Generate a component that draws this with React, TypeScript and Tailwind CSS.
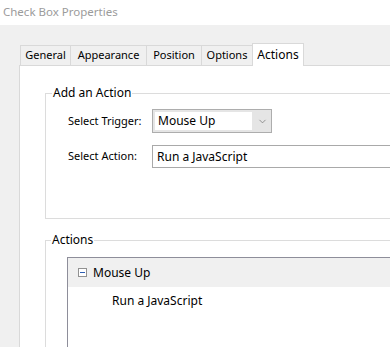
import { ChevronDown } from 'lucide-react';

const TABS = [
  { label: 'General', w: 'w-[51px]' },
  { label: 'Appearance', w: 'w-[77px]' },
  { label: 'Position', w: 'w-[56px]' },
  { label: 'Options', w: 'w-[52px]' },
] as const;

export default function App() {
  return (
    <div
      className="h-[347px] w-[390px] overflow-hidden bg-[#f0f0f0] text-[11px] text-black"
      style={{ fontFamily: '"Noto Sans", "Open Sans", sans-serif' }}
    >
      <div className="h-[25px] bg-white pl-[3px] pt-[3px] text-[11.5px] text-[#9b9b9b]">
        Check Box Properties
      </div>

      <div className="pl-[19px] pt-[18px]">
        <div className="flex h-[22px] items-end">
          {TABS.map((tab, i) => (
            <div
              key={tab.label}
              className={`${tab.w} ${i === 0 ? 'ml-px' : '-ml-px'} flex h-[20px] items-center justify-center border border-b-0 border-[#d9d9d9]`}
            >
              {tab.label}
            </div>
          ))}
          <div className="relative z-10 -mb-px -ml-px flex h-[23px] w-[52px] justify-center border border-b-0 border-[#d9d9d9] bg-white pt-[2px] text-[12px]">
            Actions
          </div>
        </div>

        <div className="w-[420px] border-l border-t border-[#d9d9d9] bg-white pb-10 pl-[25px] pt-[19px]">
          <fieldset className="border border-[#dcdcdc] pb-[50px] pl-[22px] pt-[8px]">
            <legend className="-ml-[16px] px-[1px] text-[12px] leading-[16px]">Add an Action</legend>
            <div className="flex items-center">
              <span className="w-[84px]">Select Trigger:</span>
              <div className="flex h-[24px] w-[120px] border border-[#adadad] bg-[#e5e5e5]">
                <div className="m-[2px] flex flex-1 items-center bg-white pl-[3px] text-[12px]">Mouse Up</div>
                <div className="flex w-[17px] items-center justify-center">
                  <ChevronDown className="h-[11px] w-[11px] text-[#6d6d6d]" strokeWidth={1.5} />
                </div>
              </div>
            </div>
            <div className="mt-[12px] flex items-center">
              <span className="w-[84px]">Select Action:</span>
              <div className="flex h-[23px] flex-1 items-center border border-[#a9a9a9] bg-white pl-[4px] text-[12px]">
                Run a JavaScript
              </div>
            </div>
          </fieldset>

          <fieldset className="mt-[13px] border border-[#dcdcdc] pb-10 pl-[21px] pt-[9px]">
            <legend className="-ml-[16px] px-[1px] text-[12px] leading-[16px]">Actions</legend>
            <div className="h-[120px] border border-[#8e8e9a]">
              <div className="flex h-[29px] items-center bg-[#f0f0f0] pl-[10px] text-[12px]">
                <span className="mr-[6px] flex h-[9px] w-[9px] items-center justify-center border border-[#919191] bg-white">
                  <span className="h-px w-[5px] bg-[#2f5fb3]" />
                </span>
                Mouse Up
              </div>
              <div className="pl-[44px] pt-[5px] text-[12px]">Run a JavaScript</div>
            </div>
          </fieldset>
        </div>
      </div>
    </div>
  );
}
